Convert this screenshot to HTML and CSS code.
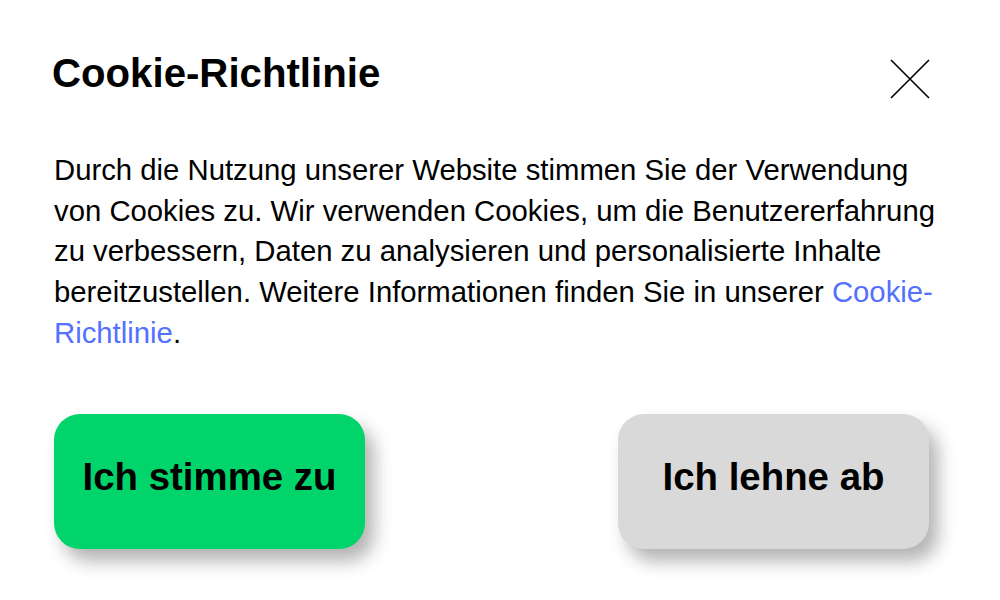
FILE: index.html
```html
<!DOCTYPE html>
<html lang="de">
<head>
<meta charset="utf-8">
<title>Cookie-Richtlinie</title>
<link rel="stylesheet" href="styles.css">
</head>
<body>
<div class="dialog">
  <div class="header">
    <h1 class="title">Cookie-Richtlinie</h1>
    <button class="close" aria-label="Schließen">
      <svg width="40" height="40" viewBox="0 0 40 40"><path d="M1 1 L39 39 M39 1 L1 39" stroke="#000" stroke-width="1.6" fill="none"/></svg>
    </button>
  </div>
  <p class="text">Durch die Nutzung unserer Website stimmen Sie der Verwendung von Cookies zu. Wir verwenden Cookies, um die Benutzererfahrung zu verbessern, Daten zu analysieren und personalisierte Inhalte bereitzustellen. Weitere Informationen finden Sie in unserer <a class="link" href="#">Cookie-Richtlinie</a>.</p>
  <div class="actions">
    <button class="btn btn-accept">Ich stimme zu</button>
    <button class="btn btn-decline">Ich lehne ab</button>
  </div>
</div>
</body>
</html>
```
FILE: styles.css
```css
html, body {
  margin: 0;
  padding: 0;
  background: #fff;
}
body {
  font-family: "Liberation Sans", Arial, sans-serif;
  color: #000;
}
.dialog {
  padding: 50px 70px 50px 54px;
}
.header {
  display: flex;
  justify-content: space-between;
  align-items: flex-start;
}
.title {
  margin: 0 0 0 -2px;
  font-size: 40.2px;
  font-weight: bold;
  line-height: 48px;
}
.close {
  background: none;
  border: 0;
  padding: 0;
  margin-top: 9px;
  width: 40px;
  height: 40px;
  cursor: pointer;
}
.close svg { display: block; }
.text {
  margin: 51px -18px 0 0;
  font-size: 29.3px;
  line-height: 40.7px;
}
.link {
  color: #5470ff;
  text-decoration: none;
}
.actions {
  display: flex;
  justify-content: space-between;
  margin: 60px 1px 0 0;
}
.btn {
  width: 311px;
  height: 135px;
  border: 0;
  border-radius: 26px;
  font-family: "Liberation Sans", Arial, sans-serif;
  font-weight: bold;
  font-size: 38.4px;
  color: #000;
  padding: 0 0 8px;
  box-shadow: 9px 12px 18px rgba(0, 0, 0, 0.3);
  cursor: pointer;
}
.btn-accept { background: #00d46b; }
.btn-decline { background: #d9d9d9; }
```
